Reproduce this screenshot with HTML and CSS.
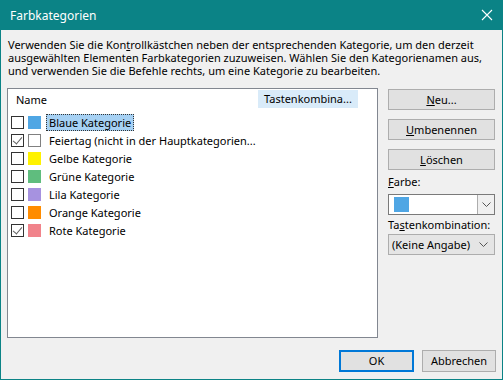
FILE: index.html
```html
<!DOCTYPE html>
<html lang="de">
<head>
	<meta charset="UTF-8">
	<title>Farbkategorien</title>
	<link rel="stylesheet" href="styles.css">
</head>
<body>
	<div id="window">
		<div id="titlebar">
			<div id="titletxt">Farbkategorien</div>
			<svg id="close" width="12" height="12" viewBox="0 0 12 12"><path d="M1 1L11 11M11 1L1 11" stroke="#fff" stroke-width="1.1" fill="none"/></svg>
		</div>
		<div id="content">
			<div id="desc">
				<div>Verwenden Sie die Kon<u>t</u>rollkästchen neben der entsprechenden Kategorie, um den derzeit</div>
				<div>ausgewählten Elementen Farbkategorien zuzuweisen. Wählen Sie den Kategorienamen aus,</div>
				<div>und verwenden Sie die Befehle rechts, um eine Kategorie zu bearbeiten.</div>
			</div>
			<div id="main">
				<div id="list">
					<div class="head">
						<div class="headname">Name</div>
						<div class="headkey">Tastenkombina...</div>
					</div>
					<div class="rows">
						<div class="row"><div class="check"></div><div class="swatch" style="background:#4fa6e4;"></div><div class="label selected">Blaue Kategorie</div></div>
						<div class="row"><div class="check on"></div><div class="swatch empty"></div><div class="label">Feiertag (nicht in der Hauptkategorien...</div></div>
						<div class="row"><div class="check"></div><div class="swatch" style="background:#fff200;"></div><div class="label">Gelbe Kategorie</div></div>
						<div class="row"><div class="check"></div><div class="swatch" style="background:#5fbd7e;"></div><div class="label">Grüne Kategorie</div></div>
						<div class="row"><div class="check"></div><div class="swatch" style="background:#a692e0;"></div><div class="label">Lila Kategorie</div></div>
						<div class="row"><div class="check"></div><div class="swatch" style="background:#ff8c00;"></div><div class="label">Orange Kategorie</div></div>
						<div class="row"><div class="check on"></div><div class="swatch" style="background:#f1838b;"></div><div class="label">Rote Kategorie</div></div>
					</div>
				</div>
				<div id="side">
					<div class="btn"><u>N</u>eu...</div>
					<div class="btn"><u>U</u>mbenennen</div>
					<div class="btn"><u>L</u>öschen</div>
					<div class="fieldlabel"><u>F</u>arbe:</div>
					<div id="colorcombo">
						<div class="comboval"><div class="comboswatch"></div></div>
						<div class="comboarrow"><svg width="9" height="5" viewBox="0 0 9 5"><path d="M0.5 0.5L4.5 4.5L8.5 0.5" stroke="#555" fill="none"/></svg></div>
					</div>
					<div class="fieldlabel">Ta<u>s</u>tenkombination:</div>
					<div id="keycombo">
						<div class="keyval">(Keine Angabe)</div>
						<svg width="9" height="5" viewBox="0 0 9 5"><path d="M0.5 0.5L4.5 4.5L8.5 0.5" stroke="#555" fill="none"/></svg>
					</div>
				</div>
			</div>
			<div id="footer">
				<div class="btn" id="ok">OK</div>
				<div class="btn" id="cancel">Abbrechen</div>
			</div>
		</div>
	</div>
</body>
</html>
```
FILE: styles.css
```css
*{
	margin: 0;
	padding: 0;
	box-sizing: border-box;
	font-family: "Noto Sans", "Open Sans", sans-serif;
}
body{
	width: 503px;
	height: 380px;
	overflow: hidden;
	background-color: #f0f0f0;
}
#window{
	width: 503px;
	height: 380px;
	display: flex;
	flex-direction: column;
}
#titlebar{
	height: 30px;
	background-color: #0b8386;
	color: white;
	display: flex;
	align-items: center;
	padding-left: 10px;
	padding-right: 10px;
}
#titletxt{
	font-size: 12px;
	flex: 1;
}
#content{
	flex: 1;
	border: 1px solid #0b8386;
	border-top: none;
	padding: 8px 6px 0 6px;
	font-size: 11px;
	color: black;
}
#desc{
	line-height: 13px;
	padding-left: 1px;
	white-space: nowrap;
}
#main{
	display: flex;
	margin-top: 11px;
}
#list{
	width: 371px;
	height: 250px;
	background-color: white;
	border: 1px solid #828790;
}
.head{
	display: flex;
	margin-top: 1px;
	height: 18px;
	align-items: center;
}
.headname{
	width: 250px;
	padding-left: 8px;
}
.headkey{
	width: 100px;
	height: 18px;
	line-height: 18px;
	padding-left: 6px;
	background-color: #d9ebf9;
}
.rows{
	margin-top: 5px;
}
.row{
	height: 18px;
	display: flex;
	align-items: center;
	padding-left: 3px;
}
.check{
	width: 13px;
	height: 13px;
	border: 1px solid #333;
	background-color: white;
	position: relative;
}
.check.on::after{
	content: "";
	position: absolute;
	left: 3px;
	top: 0px;
	width: 4px;
	height: 8px;
	border-right: 1px solid #606060;
	border-bottom: 1px solid #606060;
	transform: rotate(40deg);
}
.swatch{
	width: 13px;
	height: 13px;
	margin-left: 4px;
}
.swatch.empty{
	background-color: white;
	border: 1px solid #808080;
}
.label{
	margin-left: 5px;
	padding: 0 2px;
	height: 17px;
	line-height: 15px;
	border: 1px solid transparent;
}
.label.selected{
	background-color: #a6d1f4;
	border: 1px dotted #333;
}
#side{
	width: 107px;
	margin-left: 10px;
	margin-top: 1px;
	display: flex;
	flex-direction: column;
}
.btn{
	height: 21px;
	line-height: 19px;
	text-align: center;
	background-color: #e1e1e1;
	border: 1px solid #adadad;
	margin-bottom: 9px;
}
.fieldlabel{
	margin-top: -5px;
	height: 16px;
	line-height: 16px;
	margin-bottom: 4px;
}
#colorcombo{
	height: 21px;
	display: flex;
	border: 1px solid #7a7a7a;
	background-color: white;
	margin-bottom: 7px;
}
.comboval{
	flex: 1;
	display: flex;
	align-items: center;
	padding-left: 5px;
}
.comboswatch{
	width: 15px;
	height: 15px;
	background-color: #4fa6e4;
}
.comboarrow{
	width: 17px;
	border-left: 1px solid #adadad;
	background-color: #f0f0f0;
	display: flex;
	align-items: center;
	justify-content: center;
}
#keycombo{
	height: 21px;
	display: flex;
	align-items: center;
	border: 1px solid #adadad;
	background-color: #e5e5e5;
	padding: 0 6px 0 3px;
	margin-top: -3px;
}
.keyval{
	flex: 1;
}
#footer{
	display: flex;
	justify-content: flex-end;
	gap: 8px;
	margin-top: 12px;
}
#footer .btn{
	height: 22px;
	line-height: 20px;
	margin-bottom: 0;
}
#ok{
	width: 75px;
	border: 2px solid #0078d7;
	line-height: 18px !important;
}
#cancel{
	width: 74px;
}
```
